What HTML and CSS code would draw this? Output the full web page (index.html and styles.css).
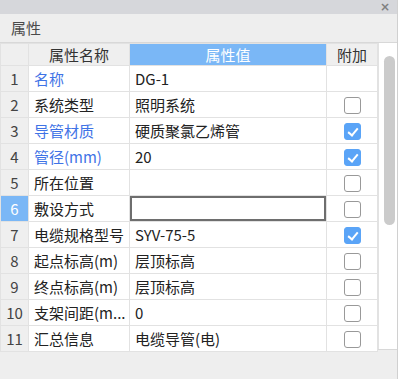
FILE: index.html
```html
<!DOCTYPE html>
<html lang="zh-CN">
<head>
    <meta charset="UTF-8">
    <meta name="viewport" content="width=device-width, initial-scale=1.0">
    <title>属性</title>
    <link rel="stylesheet" href="styles.css">
</head>
<body>
    <div class="panel">
        <div class="topbar">
            <span class="close">&times;</span>
        </div>
        <div class="title">属性</div>

        <div class="grid-wrap">
            <table class="props">
                <colgroup>
                    <col class="c-num">
                    <col class="c-name">
                    <col class="c-value">
                    <col class="c-attach">
                </colgroup>
                <thead>
                    <tr>
                        <th class="num"></th>
                        <th>属性名称</th>
                        <th class="active">属性值</th>
                        <th>附加</th>
                    </tr>
                </thead>
                <tbody>
                    <tr>
                        <td class="num">1</td>
                        <td class="name key">名称</td>
                        <td class="value">DG-1</td>
                        <td class="attach"></td>
                    </tr>
                    <tr>
                        <td class="num">2</td>
                        <td class="name">系统类型</td>
                        <td class="value">照明系统</td>
                        <td class="attach"><span class="check"></span></td>
                    </tr>
                    <tr>
                        <td class="num">3</td>
                        <td class="name key">导管材质</td>
                        <td class="value">硬质聚氯乙烯管</td>
                        <td class="attach"><span class="check on"></span></td>
                    </tr>
                    <tr>
                        <td class="num">4</td>
                        <td class="name key">管径(mm)</td>
                        <td class="value">20</td>
                        <td class="attach"><span class="check on"></span></td>
                    </tr>
                    <tr>
                        <td class="num">5</td>
                        <td class="name">所在位置</td>
                        <td class="value"></td>
                        <td class="attach"><span class="check"></span></td>
                    </tr>
                    <tr class="current">
                        <td class="num">6</td>
                        <td class="name">敷设方式</td>
                        <td class="value"><div class="editor"></div></td>
                        <td class="attach"><span class="check"></span></td>
                    </tr>
                    <tr>
                        <td class="num">7</td>
                        <td class="name">电缆规格型号</td>
                        <td class="value">SYV-75-5</td>
                        <td class="attach"><span class="check on"></span></td>
                    </tr>
                    <tr>
                        <td class="num">8</td>
                        <td class="name">起点标高(m)</td>
                        <td class="value">层顶标高</td>
                        <td class="attach"><span class="check"></span></td>
                    </tr>
                    <tr>
                        <td class="num">9</td>
                        <td class="name">终点标高(m)</td>
                        <td class="value">层顶标高</td>
                        <td class="attach"><span class="check"></span></td>
                    </tr>
                    <tr>
                        <td class="num">10</td>
                        <td class="name" title="支架间距(mm)">支架间距(m...</td>
                        <td class="value">0</td>
                        <td class="attach"><span class="check"></span></td>
                    </tr>
                    <tr>
                        <td class="num">11</td>
                        <td class="name">汇总信息</td>
                        <td class="value">电缆导管(电)</td>
                        <td class="attach"><span class="check"></span></td>
                    </tr>
                </tbody>
            </table>

            <div class="scrollbar">
                <div class="thumb"></div>
            </div>
        </div>
    </div>
</body>
</html>
```

FILE: styles.css
```css
/* Property panel */
body {
    margin: 0;
    background-color: #eeeeee;
    font-family: "Noto Sans CJK SC", "Noto Sans", sans-serif;
    font-size: 15px;
    color: #222222;
}

.panel {
    width: 398px;
    height: 379px;
    background-color: #eeeeee;
    border-right: 1px solid #d0d0d0;
    box-sizing: border-box;
}

.topbar {
    height: 14px;
    background-color: #d6d7db;
    display: flex;
    justify-content: flex-end;
    align-items: center;
    padding-right: 7px;
}

.close {
    font-family: "DejaVu Sans", sans-serif;
    font-size: 12px;
    font-weight: bold;
    line-height: 14px;
    color: #808080;
}

.title {
    height: 28px;
    line-height: 28px;
    padding-left: 11px;
    color: #4a4a4a;
}

/* Grid + scrollbar */
.grid-wrap {
    display: flex;
    height: 308px;
    border-top: 1px solid #d8d8d8;
    border-bottom: 1px solid #d8d8d8;
    box-sizing: border-box;
}

.props {
    width: 377px;
    border-collapse: collapse;
    table-layout: fixed;
    background-color: #ffffff;
    align-self: flex-start;
}

.c-num { width: 28px; }
.c-name { width: 101px; }
.c-value { width: 197px; }
.c-attach { width: 51px; }

.props th,
.props td {
    border: 1px solid #e2e2e2;
    padding: 0;
    white-space: nowrap;
}

.props th {
    height: 21px;
    line-height: 21px;
    font-weight: normal;
    text-align: center;
    background-color: #efefef;
    color: #333333;
}

.props th.active {
    background-color: #7ab7f6;
    color: #ffffff;
}

.props td {
    height: 25px;
    line-height: 25px;
}

.props td.num {
    background-color: #efefef;
    text-align: center;
    color: #444444;
}

.props tr.current td.num {
    background-color: #7ab7f6;
    color: #ffffff;
}

.props td.name {
    padding-left: 5px;
}

.props td.name.key {
    color: #3f73e6;
}

.props td.value {
    padding-left: 5px;
}

.props tr.current td.value {
    padding: 0;
}

.editor {
    height: 25px;
    border: 2px solid #6e6e6e;
    box-sizing: border-box;
    background-color: #ffffff;
}

.props td.attach {
    text-align: center;
}

.check {
    display: inline-block;
    width: 17px;
    height: 17px;
    border: 1px solid #999999;
    border-radius: 3px;
    box-sizing: border-box;
    vertical-align: middle;
    position: relative;
    top: -1px;
    background-color: #ffffff;
}

.check.on {
    background-color: #5aa4f7;
    border-color: #5aa4f7;
}

.check.on::after {
    content: "";
    position: absolute;
    left: 5px;
    top: 2px;
    width: 4px;
    height: 8px;
    border: solid #ffffff;
    border-width: 0 2px 2px 0;
    transform: rotate(40deg);
}

.scrollbar {
    flex: 1;
    background-color: #ffffff;
    border-left: 1px solid #e2e2e2;
    position: relative;
}

.thumb {
    position: absolute;
    left: 5px;
    top: 13px;
    width: 11px;
    height: 169px;
    border-radius: 6px;
    background-color: #cbcbcb;
}
```
